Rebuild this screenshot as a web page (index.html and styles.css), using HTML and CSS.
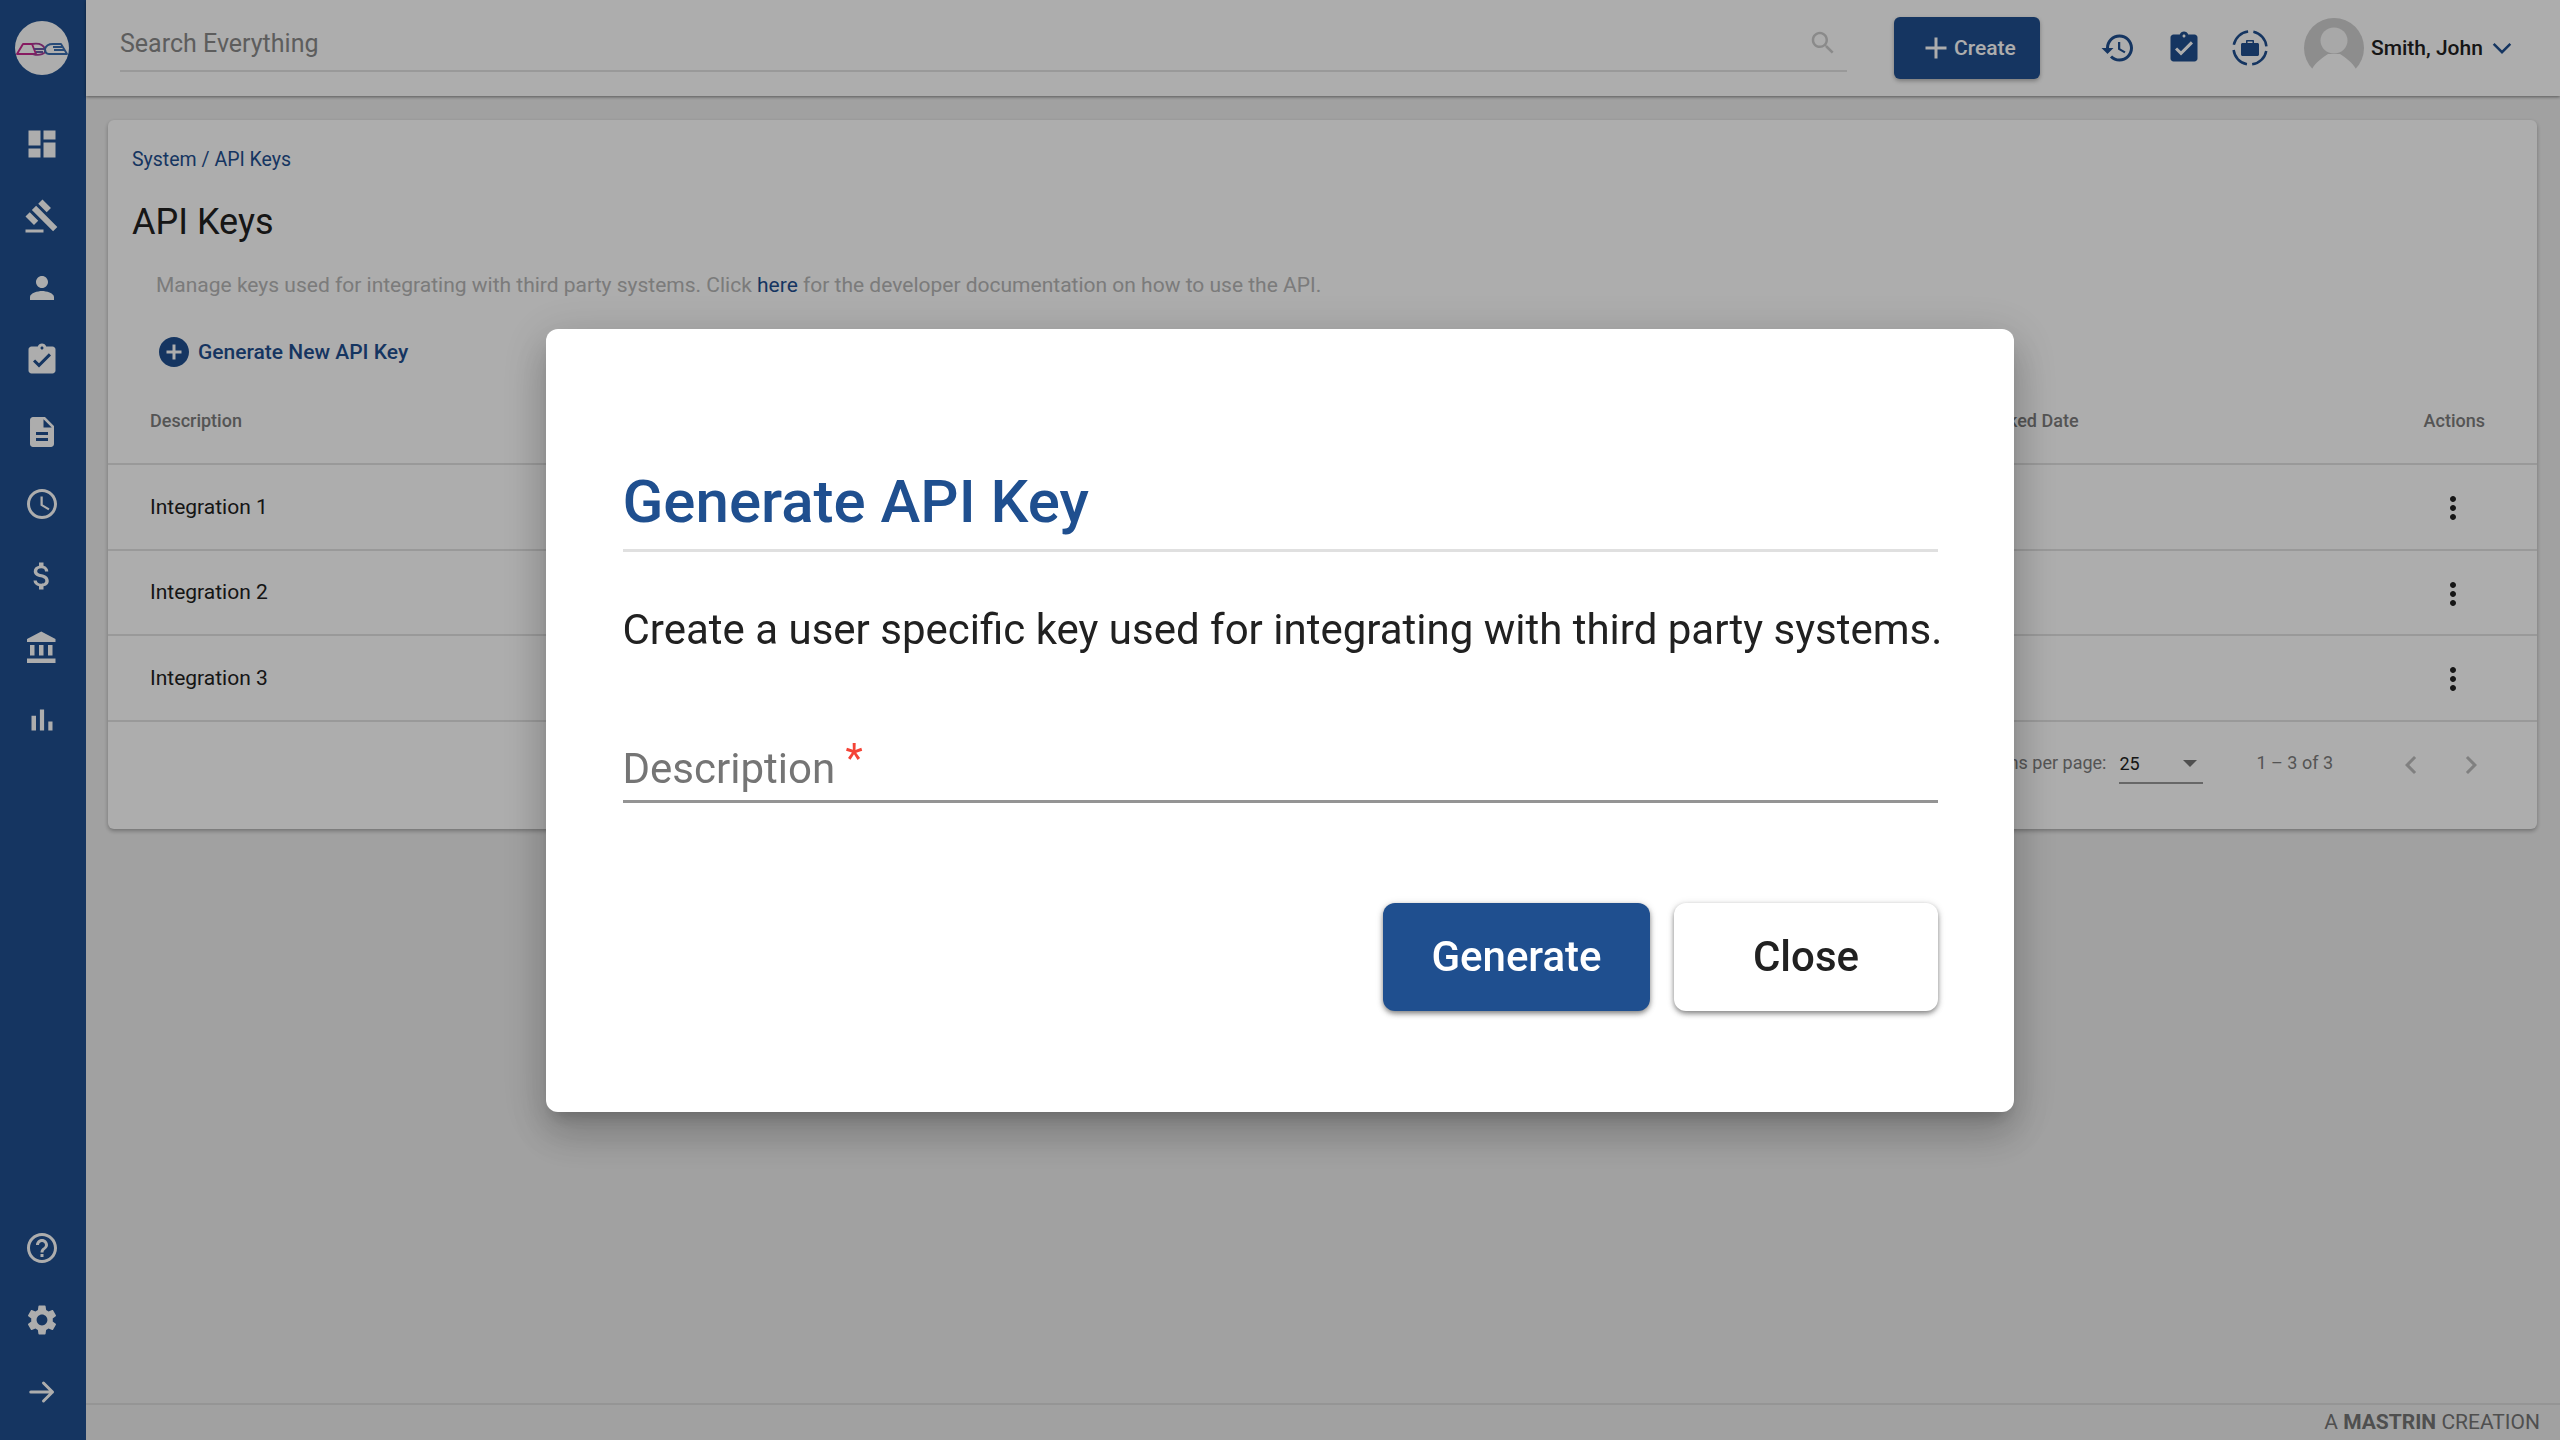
FILE: index.html
```html
<!DOCTYPE html>
<html lang="en">
<head>
<meta charset="utf-8">
<title>API Keys</title>
<link rel="stylesheet" href="styles.css">
</head>
<body>
<div class="app">
  <nav class="sidebar">
    <div class="logo-wrap">
      <svg class="logo" viewBox="0 0 54 54">
        <circle cx="27" cy="27" r="27" fill="#fff"/>
        <g fill="none" stroke-width="1.900" stroke-linejoin="round">
          <path d="M2 33 L8 23 H17 L21 33 Z" stroke="#c8288f"/>
          <path d="M17 23 C23 22 28 23 30 28 C32 33 24 35 18 33" stroke="#a83a96"/>
          <path d="M19 28 H29 M21 31 H28" stroke="#6a5aa5"/>
          <path d="M30 28 C31 24 34 23 38 23 H46 L52 33 H34 C31 33 30 31 30 28 Z" stroke="#3a6db0"/>
          <path d="M38 26 H47 M39 29 H50" stroke="#3a6db0"/>
        </g>
      </svg>
    </div>
    <div class="nav-item"><svg class="i36" viewBox="0 0 24 24"><path d="M3 13h8V3H3v10zm0 8h8v-6H3v6zm10 0h8V11h-8v10zm0-18v6h8V3h-8z"/></svg></div>
    <div class="nav-item"><svg class="i36" viewBox="0 0 24 24"><path d="M1 21h12v2H1zM5.245 8.07l2.83-2.827 14.14 14.142-2.828 2.828zM12.317 1l5.657 5.656-2.83 2.83-5.654-5.66zM3.825 9.485l5.657 5.657-2.828 2.828-5.657-5.657z"/></svg></div>
    <div class="nav-item"><svg class="i36" viewBox="0 0 24 24"><path d="M12 12c2.21 0 4-1.79 4-4s-1.79-4-4-4-4 1.79-4 4 1.79 4 4 4zm0 2c-2.67 0-8 1.34-8 4v2h16v-2c0-2.66-5.33-4-8-4z"/></svg></div>
    <div class="nav-item"><svg class="i36" viewBox="0 0 24 24"><path d="M19 3h-4.18C14.4 1.84 13.3 1 12 1c-1.3 0-2.4.84-2.82 2H5c-1.1 0-2 .9-2 2v14c0 1.1.9 2 2 2h14c1.1 0 2-.9 2-2V5c0-1.1-.9-2-2-2zm-7 0c.55 0 1 .45 1 1s-.45 1-1 1-1-.45-1-1 .45-1 1-1zm-2 14l-4-4 1.41-1.41L10 14.17l6.59-6.59L18 9l-8 8z"/></svg></div>
    <div class="nav-item"><svg class="i36" viewBox="0 0 24 24"><path d="M14 2H6c-1.1 0-1.99.9-1.99 2L4 20c0 1.1.89 2 1.99 2H18c1.1 0 2-.9 2-2V8l-6-6zm2 16H8v-2h8v2zm0-4H8v-2h8v2zm-3-5V3.5L18.5 9H13z"/></svg></div>
    <div class="nav-item"><svg class="i36" viewBox="0 0 24 24"><path d="M11.99 2C6.47 2 2 6.48 2 12s4.47 10 9.99 10C17.52 22 22 17.52 22 12S17.52 2 11.99 2zM12 20c-4.42 0-8-3.58-8-8s3.58-8 8-8 8 3.58 8 8-3.58 8-8 8zm.5-13H11v6l5.25 3.15.75-1.23-4.5-2.67z"/></svg></div>
    <div class="nav-item"><svg class="i36" viewBox="0 0 24 24"><path d="M11.8 10.9c-2.27-.59-3-1.2-3-2.15 0-1.09 1.01-1.85 2.7-1.85 1.78 0 2.44.85 2.5 2.1h2.21c-.07-1.72-1.12-3.3-3.21-3.81V3h-3v2.16c-1.94.42-3.5 1.68-3.5 3.61 0 2.31 1.91 3.46 4.7 4.13 2.5.6 3 1.48 3 2.41 0 .69-.49 1.79-2.7 1.79-2.06 0-2.87-.92-2.98-2.1h-2.2c.12 2.19 1.76 3.42 3.68 3.83V21h3v-2.15c1.95-.37 3.5-1.5 3.5-3.55 0-2.84-2.43-3.81-4.7-4.4z"/></svg></div>
    <div class="nav-item"><svg class="i36" viewBox="0 0 24 24"><path d="M4 10v7h3v-7H4zm6 0v7h3v-7h-3zM2 22h19v-3H2v3zm14-12v7h3v-7h-3zm-4.5-9L2 6v2h19V6l-9.5-5z"/></svg></div>
    <div class="nav-item"><svg class="i36" viewBox="0 0 24 24"><path d="M5 9.2h3V19H5zM10.6 5h2.8v14h-2.8zm5.6 8H19v6h-2.8z"/></svg></div>
    <div class="nav-bottom">
      <div class="nav-item"><svg class="i36" viewBox="0 0 24 24"><path d="M11 18h2v-2h-2v2zm1-16C6.48 2 2 6.48 2 12s4.48 10 10 10 10-4.48 10-10S17.52 2 12 2zm0 18c-4.41 0-8-3.59-8-8s3.59-8 8-8 8 3.59 8 8-3.59 8-8 8zm0-14c-2.21 0-4 1.79-4 4h2c0-1.1.9-2 2-2s2 .9 2 2c0 2-3 1.75-3 5h2c0-2.25 3-2.5 3-5 0-2.21-1.79-4-4-4z"/></svg></div>
      <div class="nav-item"><svg class="i36" viewBox="0 0 24 24"><path d="M19.14 12.94c.04-.3.06-.61.06-.94 0-.32-.02-.64-.07-.94l2.03-1.58c.18-.14.23-.41.12-.61l-1.92-3.32c-.12-.22-.37-.29-.59-.22l-2.39.96c-.5-.38-1.03-.7-1.62-.94l-.36-2.54c-.04-.24-.24-.41-.48-.41h-3.84c-.24 0-.43.17-.47.41l-.36 2.54c-.59.24-1.13.57-1.62.94l-2.39-.96c-.22-.08-.47 0-.59.22L2.74 8.87c-.12.21-.08.47.12.61l2.03 1.58c-.05.3-.09.63-.09.94s.02.64.07.94l-2.03 1.58c-.18.14-.23.41-.12.61l1.92 3.32c.12.22.37.29.59.22l2.39-.96c.5.38 1.03.7 1.62.94l.36 2.54c.05.24.24.41.48.41h3.84c.24 0 .44-.17.47-.41l.36-2.54c.59-.24 1.13-.56 1.62-.94l2.39.96c.22.08.47 0 .59-.22l1.92-3.32c.12-.22.07-.47-.12-.61l-2.01-1.58zM12 15.6c-1.98 0-3.6-1.62-3.6-3.6s1.62-3.6 3.6-3.6 3.6 1.62 3.6 3.6-1.62 3.6-3.6 3.6z"/></svg></div>
      <div class="nav-item"><svg class="i36 stroke" viewBox="0 0 24 24"><path d="M4.500 12H19M13 6l6 6-6 6"/></svg></div>
    </div>
  </nav>
  <div class="main">
    <header class="topbar">
      <div class="search">
        <span class="search-text">Search Everything</span>
        <svg class="search-icon" viewBox="0 0 24 24"><path d="M15.5 14h-.79l-.28-.27C15.41 12.59 16 11.11 16 9.5 16 5.91 13.09 3 9.5 3S3 5.91 3 9.5 5.91 16 9.5 16c1.61 0 3.09-.59 4.23-1.57l.27.28v.79l5 4.99L20.49 19l-4.99-5zm-6 0C7.01 14 5 11.99 5 9.5S7.01 5 9.5 5 14 7.01 14 9.5 11.99 14 9.5 14z"/></svg>
      </div>
      <div class="create-btn"><svg class="i36" viewBox="0 0 24 24"><path d="M19 13h-6v6h-2v-6H5v-2h6V5h2v6h6v2z"/></svg><span>Create</span></div>
      <div class="top-icons">
        <svg class="i36 navy" viewBox="0 0 24 24"><path d="M13 3c-4.97 0-9 4.03-9 9H1l3.89 3.89.07.14L9 12H6c0-3.87 3.13-7 7-7s7 3.13 7 7-3.13 7-7 7c-1.93 0-3.68-.79-4.94-2.06l-1.42 1.42C8.27 19.99 10.51 21 13 21c4.97 0 9-4.03 9-9s-4.03-9-9-9zm-1 5v5l4.28 2.54.72-1.21-3.5-2.08V8H12z"/></svg>
        <svg class="i36 navy" viewBox="0 0 24 24"><path d="M19 3h-4.18C14.4 1.84 13.3 1 12 1c-1.3 0-2.4.84-2.82 2H5c-1.1 0-2 .9-2 2v14c0 1.1.9 2 2 2h14c1.1 0 2-.9 2-2V5c0-1.1-.9-2-2-2zm-7 0c.55 0 1 .45 1 1s-.45 1-1 1-1-.45-1-1 .45-1 1-1zm-2 14l-4-4 1.41-1.41L10 14.17l6.59-6.59L18 9l-8 8z"/></svg>
        <svg class="i36 navy" viewBox="0 0 36 36">
          <circle class="ring" cx="18" cy="18" r="16.5"/>
          <path d="M14 13v-2c0-.6.4-1 1-1h6c.6 0 1 .4 1 1v2h3.500c.8 0 1.500.7 1.500 1.500v10c0 .8-.7 1.500-1.500 1.500h-15c-.8 0-1.500-.7-1.500-1.500v-10c0-.8.7-1.500 1.500-1.500zm1.500 0h5v-1.500h-5z" fill-rule="evenodd"/>
        </svg>
      </div>
      <svg class="avatar" viewBox="0 0 60 60">
        <circle cx="30" cy="30" r="30" fill="#d0d0d0"/>
        <ellipse cx="30" cy="22.500" rx="13.500" ry="13" fill="#f8f8f8"/>
        <path d="M8 51 C12 44 18 40 24 36 H36 C42 40 48 44 52 51 L60 60 H0 Z" fill="#fff"/>
      </svg>
      <span class="user-name">Smith, John</span>
      <svg class="user-chevron" viewBox="0 0 24 14"><path d="M2 2l10 10L22 2"/></svg>
    </header>
    <main class="content">
      <section class="card">
        <div class="crumb">System / API Keys</div>
        <h1 class="page-title">API Keys</h1>
        <p class="page-desc">Manage keys used for integrating with third party systems. Click <a class="link">here</a> for the developer documentation on how to use the API.</p>
        <div class="gen-link">
          <svg class="i36 navy" viewBox="0 0 24 24"><path d="M12 2C6.48 2 2 6.48 2 12s4.48 10 10 10 10-4.48 10-10S17.52 2 12 2zm5 11h-4v4h-2v-4H7v-2h4V7h2v4h4v2z"/></svg>
          <span>Generate New API Key</span>
        </div>
        <div class="row head">
          <span class="col-name">Description</span>
          <span class="col-date">Revoked Date</span>
          <span class="col-actions">Actions</span>
        </div>
        <div class="row">
          <span class="col-name">Integration 1</span>
          <svg class="i36 more" viewBox="0 0 24 24"><path d="M12 8c1.100 0 2-.9 2-2s-.9-2-2-2-2 .9-2 2 .9 2 2 2zm0 2c-1.100 0-2 .9-2 2s.9 2 2 2 2-.9 2-2-.9-2-2-2zm0 6c-1.100 0-2 .9-2 2s.9 2 2 2 2-.9 2-2-.9-2-2-2z"/></svg>
        </div>
        <div class="row">
          <span class="col-name">Integration 2</span>
          <svg class="i36 more" viewBox="0 0 24 24"><path d="M12 8c1.100 0 2-.9 2-2s-.9-2-2-2-2 .9-2 2 .9 2 2 2zm0 2c-1.100 0-2 .9-2 2s.9 2 2 2 2-.9 2-2-.9-2-2-2zm0 6c-1.100 0-2 .9-2 2s.9 2 2 2 2-.9 2-2-.9-2-2-2z"/></svg>
        </div>
        <div class="row">
          <span class="col-name">Integration 3</span>
          <svg class="i36 more" viewBox="0 0 24 24"><path d="M12 8c1.100 0 2-.9 2-2s-.9-2-2-2-2 .9-2 2 .9 2 2 2zm0 2c-1.100 0-2 .9-2 2s.9 2 2 2 2-.9 2-2-.9-2-2-2zm0 6c-1.100 0-2 .9-2 2s.9 2 2 2 2-.9 2-2-.9-2-2-2z"/></svg>
        </div>
        <div class="paginator">
          <span class="per-page">Items per page:</span>
          <div class="page-select"><span>25</span><i class="caret"></i></div>
          <span class="range">1 – 3 of 3</span>
          <svg class="i36 pager" viewBox="0 0 24 24"><path d="M15.410 7.410L14 6l-6 6 6 6 1.410-1.410L10.830 12z"/></svg>
          <svg class="i36 pager" viewBox="0 0 24 24"><path d="M10 6L8.590 7.410 13.170 12l-4.580 4.590L10 18l6-6z"/></svg>
        </div>
      </section>
    </main>
    <footer class="footer">A <b>MASTRIN</b> CREATION</footer>
  </div>
</div>
<div class="overlay">
  <div class="modal">
    <h2 class="modal-title">Generate API Key</h2>
    <p class="modal-text">Create a user specific key used for integrating with third party systems.</p>
    <div class="field">Description <span class="req">*</span></div>
    <div class="modal-actions">
      <div class="btn primary">Generate</div>
      <div class="btn plain">Close</div>
    </div>
  </div>
</div>
</body>
</html>
```
FILE: styles.css
```css
* { box-sizing: border-box; }
html, body { margin: 0; height: 100%; }
body { font-family: Roboto, "Liberation Sans", sans-serif; color: #212121; background: #eee; overflow: hidden; }
.app { display: flex; height: 1440px; }
.i36 { width: 36px; height: 36px; fill: currentColor; flex: none; display: block; }
.navy { color: #1f4f8f; }
.stroke { fill: none; stroke: currentColor; stroke-width: 2; stroke-linecap: round; stroke-linejoin: round; }

.sidebar { width: 86px; flex: none; background: #1f4f8f; color: #fff; display: flex; flex-direction: column; align-items: center; padding: 0 2px 12px 0; }
.logo-wrap { height: 108px; padding-top: 21px; }
.logo { width: 54px; height: 54px; display: block; }
.nav-item { height: 72px; width: 84px; display: flex; align-items: center; justify-content: center; }
.nav-bottom { margin-top: auto; }

.main { flex: 1; min-width: 0; display: flex; flex-direction: column; }
.topbar { height: 96px; flex: none; background: #fff; display: flex; align-items: center; padding-left: 34px; box-shadow: 0 1px 3px rgba(0,0,0,.45); position: relative; }
.search { width: 1727px; height: 72px; align-self: flex-start; padding-top: 29px; display: flex; justify-content: space-between; border-bottom: 2px solid #e2e2e2; }
.search-text { font-size: 25px; line-height: 30px; color: #8a8a8a; }
.search-icon { width: 30px; height: 30px; fill: #ccc; margin-right: 9px; margin-top: -1px; }
.create-btn { margin-left: 47px; width: 146px; height: 62px; background: #1f4f8f; color: #fff; border-radius: 6px; display: flex; align-items: center; padding-left: 24px; font-size: 21px; font-weight: 500; box-shadow: 0 2px 4px rgba(0,0,0,.3); }
.top-icons { margin-left: 60px; display: flex; gap: 30px; }
.ring { fill: none; stroke: currentColor; stroke-width: 2.500; stroke-dasharray: 20.500 5.400; stroke-dashoffset: -3; }
.avatar { width: 60px; height: 60px; margin-left: 36px; display: block; }
.user-name { margin-left: 7px; font-size: 21px; font-weight: 500; white-space: nowrap; }
.user-chevron { width: 20px; height: 12px; margin-left: 9px; fill: none; stroke: #1f4f8f; stroke-width: 3; }

.content { flex: 1; padding: 24px 23px 0 22px; }
.card { height: 709px; background: #fff; border-radius: 6px; box-shadow: 0 2px 4px rgba(0,0,0,.3); padding-top: 28px; }
.crumb { margin-left: 24px; font-size: 19.500px; line-height: 24px; color: #1f4f8f; }
.page-title { margin: 28px 0 0 24px; font-size: 36px; line-height: 44px; font-weight: 400; }
.page-desc { margin: 29px 0 0 48px; font-size: 21px; line-height: 24px; color: #b5b5b5; }
.link { color: #1f4f8f; }
.gen-link { margin: 37px 0 8px 48px; display: flex; align-items: center; gap: 6px; font-size: 21px; font-weight: 500; color: #1f4f8f; height: 36px; }
.row { height: 85.500px; display: flex; align-items: center; justify-content: space-between; padding: 0 66px 0 42px; border-bottom: 2px solid #e2e2e2; font-size: 21px; }
.row.head { font-size: 18px; font-weight: 500; color: #7d7d7d; padding-right: 52px; height: 87px; }
.col-date { margin-left: auto; margin-right: 345px; }
.more { margin-top: 3px; }
.paginator { display: flex; align-items: center; justify-content: flex-end; height: 82px; padding-right: 48px; font-size: 18px; color: #7d7d7d; }
.page-select { margin-left: 13px; width: 84px; height: 38px; border-bottom: 2px solid #999; display: flex; justify-content: space-between; align-items: center; color: #212121; padding-right: 6px; margin-top: 4px; }
.caret { width: 0; height: 0; border-left: 7px solid transparent; border-right: 7px solid transparent; border-top: 7px solid #777; }
.range { margin-left: 53px; margin-right: 60px; }
.pager { color: #bdbdbd; margin-top: 5px; }
.pager + .pager { margin-left: 24px; }
.footer { height: 37px; flex: none; border-top: 2px solid #dcdcdc; text-align: right; padding-right: 20px; font-size: 21px; line-height: 34px; color: #757575; }

.overlay { position: fixed; inset: 0; background: rgba(0,0,0,.32); display: flex; align-items: center; justify-content: center; }
.modal { width: 1468px; height: 783px; background: #fff; border-radius: 12px; padding: 138px 76px 0 76.500px; box-shadow: 0 11px 15px -7px rgba(0,0,0,.2), 0 24px 38px 3px rgba(0,0,0,.14), 0 9px 46px 8px rgba(0,0,0,.12); }
.modal-title { margin: 0; font-size: 60px; line-height: 70px; font-weight: 500; color: #1f4f8f; padding-bottom: 12px; border-bottom: 3px solid #e0e0e0; }
.modal-text { margin: 53px 0 0; font-size: 42px; line-height: 50px; white-space: nowrap; }
.field { margin-top: 89px; font-size: 42px; line-height: 50px; color: #757575; border-bottom: 3px solid #949494; height: 59px; }
.req { color: #f44336; font-size: 40px; line-height: 0; vertical-align: 11px; }
.modal-actions { margin-top: 100px; display: flex; justify-content: flex-end; gap: 24px; }
.btn { height: 108px; border-radius: 12px; display: flex; align-items: center; justify-content: center; font-size: 42px; font-weight: 500; box-shadow: 0 3px 6px -1px rgba(0,0,0,.4), 0 2px 4px 0 rgba(0,0,0,.14), 0 1px 8px 0 rgba(0,0,0,.12); }
.btn.primary { width: 267px; background: #1f4f8f; color: #fff; }
.btn.plain { width: 264px; background: #fff; color: #212121; }
```
